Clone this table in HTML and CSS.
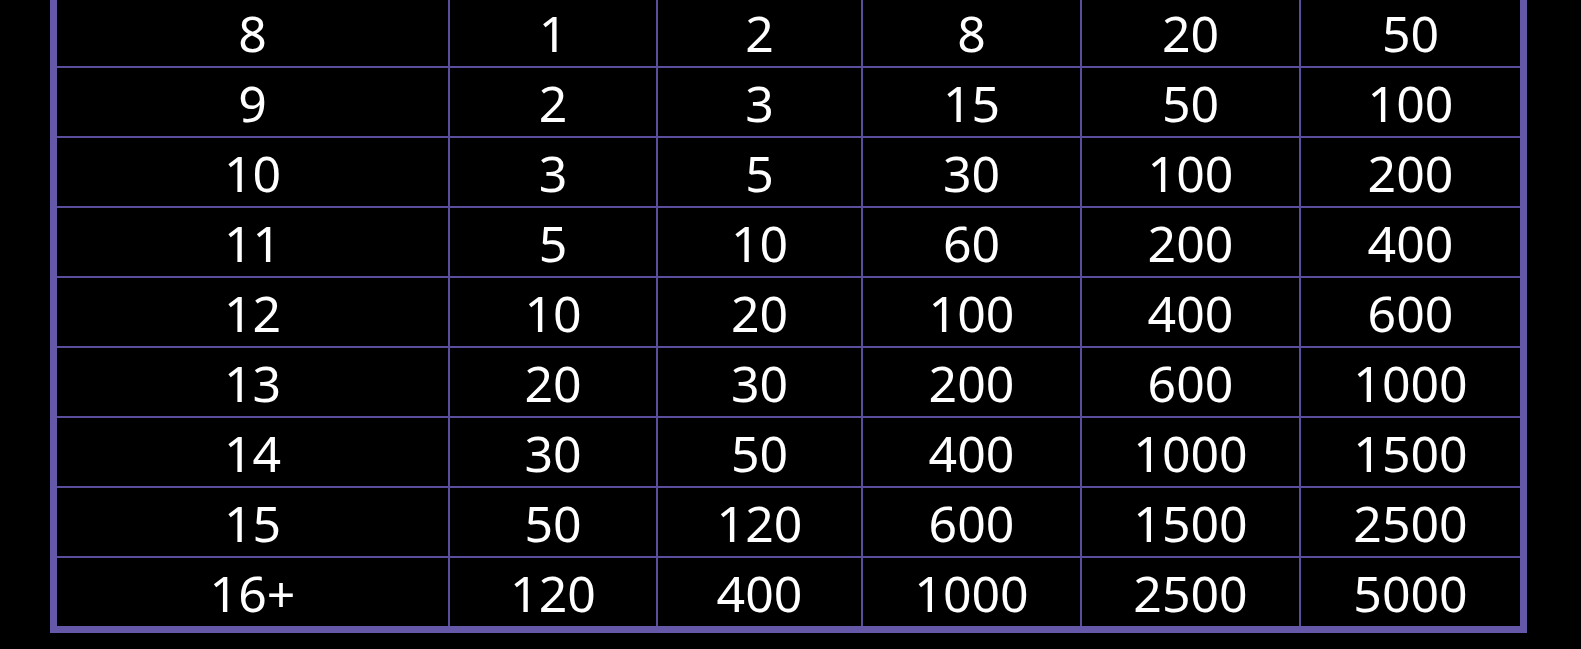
FILE: index.html
```html
<!DOCTYPE html>
<html>
<head>
<meta charset="utf-8">
<link rel="stylesheet" href="styles.css">
</head>
<body>
<div class="table">
  <div class="cell">8</div><div class="cell">1</div><div class="cell">2</div><div class="cell">8</div><div class="cell">20</div><div class="cell">50</div>
  <div class="cell">9</div><div class="cell">2</div><div class="cell">3</div><div class="cell">15</div><div class="cell">50</div><div class="cell">100</div>
  <div class="cell">10</div><div class="cell">3</div><div class="cell">5</div><div class="cell">30</div><div class="cell">100</div><div class="cell">200</div>
  <div class="cell">11</div><div class="cell">5</div><div class="cell">10</div><div class="cell">60</div><div class="cell">200</div><div class="cell">400</div>
  <div class="cell">12</div><div class="cell">10</div><div class="cell">20</div><div class="cell">100</div><div class="cell">400</div><div class="cell">600</div>
  <div class="cell">13</div><div class="cell">20</div><div class="cell">30</div><div class="cell">200</div><div class="cell">600</div><div class="cell">1000</div>
  <div class="cell">14</div><div class="cell">30</div><div class="cell">50</div><div class="cell">400</div><div class="cell">1000</div><div class="cell">1500</div>
  <div class="cell">15</div><div class="cell">50</div><div class="cell">120</div><div class="cell">600</div><div class="cell">1500</div><div class="cell">2500</div>
  <div class="cell">16+</div><div class="cell">120</div><div class="cell">400</div><div class="cell">1000</div><div class="cell">2500</div><div class="cell">5000</div>
</div>
</body>
</html>
```
FILE: styles.css
```css
html, body {
  margin: 0;
  padding: 0;
  background: #000;
  overflow: hidden;
}
body {
  height: 649px;
  font-family: "Noto Sans", "Open Sans", sans-serif;
}
.table {
  margin-left: 50px;
  margin-top: -9px;
  width: 1463px;
  display: grid;
  grid-template-columns: 391px 206px 203px 217px 217px 219px;
  grid-auto-rows: 68px;
  gap: 2px;
  background: #5a4e9c;
  border: 7px solid #6658a8;
}
.cell {
  background: #000;
  color: #fff;
  font-size: 50px;
  display: flex;
  align-items: center;
  justify-content: center;
  line-height: 1;
  padding-top: 2px;
}
```
